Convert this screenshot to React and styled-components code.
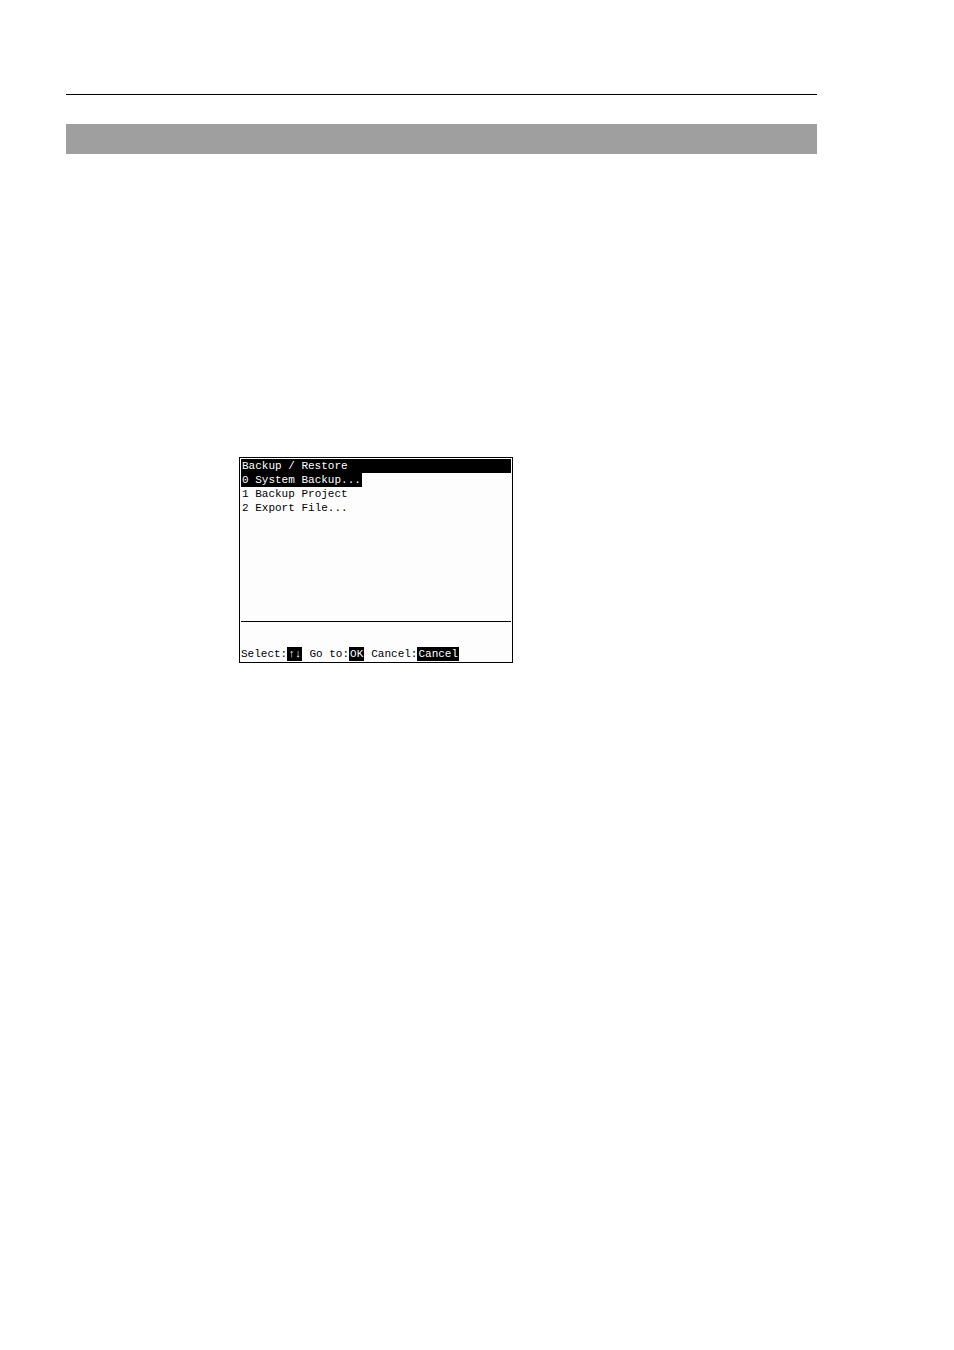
import { useState } from "react";
import styled, { createGlobalStyle } from "styled-components";

const GlobalStyle = createGlobalStyle`
  body {
    margin: 0;
    background-color: #fff;
  }
`;

const Page = styled.main`
  box-sizing: border-box;
  min-height: 100vh;
  padding: 94px 137px 40px 66px;
`;

const Rule = styled.hr`
  margin: 0;
  border: 0;
  border-top: 1px solid #000;
`;

const Banner = styled.div`
  height: 30px;
  margin-top: 29px;
  background-color: #9f9f9f;
`;

const Screen = styled.section`
  box-sizing: border-box;
  max-width: 274px;
  margin: 303px 0 0 173px;
  padding: 1px;
  border: 1px solid #000;
  background-color: #fdfdfd;
  color: #000;
  font-family: "Liberation Mono", monospace;
  font-size: 11px;
  line-height: 14px;
`;

const Title = styled.h1`
  margin: 0;
  padding: 0 1px;
  background-color: #000;
  color: #fff;
  font-size: 11px;
  font-weight: 400;
`;

const Menu = styled.ul`
  min-height: 148px;
  margin: 0;
  padding: 0;
  list-style: none;
`;

const MenuItem = styled.li`
  display: flex;
`;

const Button = styled.button`
  margin: 0;
  padding: 0 1px;
  border: 0;
  background-color: ${(props) => (props.$inverse ? "#000" : "transparent")};
  color: ${(props) => (props.$inverse ? "#fff" : "#000")};
  font: inherit;
  white-space: nowrap;
  cursor: pointer;
`;

const KeyBar = styled.footer`
  display: flex;
  gap: 7px;
  padding-top: 25px;
`;

const KeyGroup = styled.label`
  display: flex;
  white-space: nowrap;
`;

const items = ["System Backup...", "Backup Project", "Export File..."];

const keys = [
  { label: "Select:", name: "↑↓" },
  { label: "Go to:", name: "OK" },
  { label: "Cancel:", name: "Cancel" },
];

const App = () => {
  const [selected, setSelected] = useState(0);

  return (
    <Page>
      <GlobalStyle />
      <Rule />
      <Banner />
      <Screen>
        <Title>Backup / Restore</Title>
        <Menu>
          {items.map((item, index) => (
            <MenuItem key={item}>
              <Button
                type="button"
                $inverse={index === selected}
                onClick={() => setSelected(index)}
              >
                {index} {item}
              </Button>
            </MenuItem>
          ))}
        </Menu>
        <Rule />
        <KeyBar>
          {keys.map((key) => (
            <KeyGroup key={key.name}>
              {key.label}
              <Button type="button" $inverse>
                {key.name}
              </Button>
            </KeyGroup>
          ))}
        </KeyBar>
      </Screen>
    </Page>
  );
};

export default App;
